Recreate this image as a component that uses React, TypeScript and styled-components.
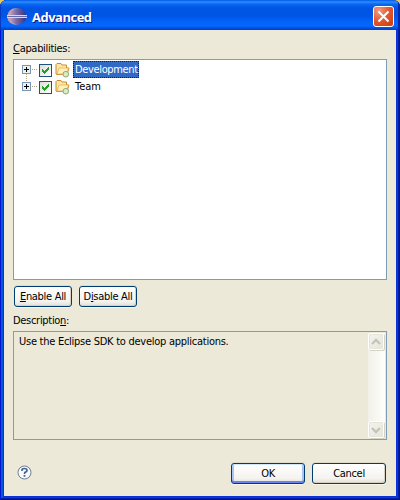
import React from 'react';
import styled, { createGlobalStyle, css } from 'styled-components';

const Global = createGlobalStyle`
  * { box-sizing: border-box; }
  html, body { margin: 0; padding: 0; width: 400px; height: 500px; overflow: hidden; background: #e8c860; }
  body { font: 11px/14px "DejaVu Sans Condensed", "DejaVu Sans", sans-serif; font-stretch: condensed; color: #000; }
  svg { display: block; flex: none; }
`;

const Frame = styled.div`
  width: 400px;
  height: 500px;
  display: flex;
  flex-direction: column;
  border-radius: 7px 7px 0 0;
  overflow: hidden;
  padding: 0 4px 4px;
  background: #0831d9;
  box-shadow: inset 1px 0 #0019cf, inset -1px -1px #00138c, inset -2px -2px #001ea0, inset 3px 0 #0855dd, inset -3px -3px #0441d8;
`;

const TitleBar = styled.header`
  height: 30px;
  flex: none;
  margin: 0 -4px;
  padding: 3px 6px 0 7px;
  display: flex;
  align-items: center;
  background: linear-gradient(#0058e6 0, #2b8fff 2px, #0c68f4 4px, #0054e3 8px, #0055e5 16px, #0264fb 22px, #0368ff 26px, #0050d8 28px, #003dd7 30px);
  box-shadow: inset 1px 0 #0838c0, inset -2px 0 #0028a8;
`;

const Title = styled.h1`
  margin: 1px auto 0 5px;
  font: bold 13px/16px "Open Sans", "DejaVu Sans", sans-serif;
  letter-spacing: -0.5px;
  color: #fff;
  text-shadow: 1px 1px #0a1883;
`;

const CloseButton = styled.button`
  width: 21px;
  height: 21px;
  padding: 0;
  display: grid;
  place-items: center;
  border: 1px solid #fff;
  border-radius: 3px;
  background: radial-gradient(circle at 25% 20%, #f09a80 0, #e2572f 50%, #c83b0c 100%);
`;

const Client = styled.main`
  flex: 1;
  padding: 12px 9px 0;
  background: #ece9d8;
  display: flex;
  flex-direction: column;
`;

const Text = styled.span<{ $spacing?: number }>`
  white-space: nowrap;
  letter-spacing: ${p => p.$spacing ?? -0.3}px;
`;

const Key = styled.span`
  text-decoration: underline;
  text-decoration-thickness: 1px;
  text-underline-offset: 1px;
  text-decoration-skip-ink: none;
`;

const Caption = styled.div`
  height: 14px;
  margin-bottom: 3px;
`;

const Tree = styled.div`
  height: 221px;
  flex: none;
  border: 1px solid #7f9db9;
  background: #fff;
  padding: 1px 0 0 8px;
`;

const TreeRow = styled.div`
  height: 17px;
  display: flex;
  align-items: center;
`;

const Checkbox = styled.span`
  width: 13px;
  height: 13px;
  display: grid;
  place-items: center;
  border: 1px solid #1c5180;
  background: linear-gradient(135deg, #dcdcd7, #fff);
  margin: 2px 3px 0 0;
`;

const RowLabel = styled.span<{ $selected?: boolean }>`
  height: 17px;
  margin-left: 3px;
  padding: 0 1px;
  line-height: 17px;
  border: solid transparent;
  border-width: 0 1px;
  ${p => p.$selected && css`
    width: 66px;
    color: #fff;
    background: #316ac5;
    outline: 1px dotted #102040;
    outline-offset: -1px;
  `}
`;

const Buttons = styled.div`
  display: flex;
  gap: 7px;
  height: 21px;
  margin: 6px 0 7px;
  padding-left: 1px;
`;

const PushButton = styled.button<{ $width: number; $primary?: boolean }>`
  width: ${p => p.$width}px;
  height: 21px;
  padding: 1px 0 0;
  font: inherit;
  color: #000;
  border: 1px solid #003c74;
  border-radius: 3px;
  background: linear-gradient(#fff, #f4f3ee 75%, #e2dfd5);
  box-shadow: ${p => p.$primary
    ? 'inset 0 1px #cee7ff, inset 0 -2px #6982ee, inset 2px 0 #a9c5f4, inset -2px 0 #a9c5f4'
    : 'inset -1px -1px #d6d0c5'}, 0 1px #f7f5ec, 0 -1px #dedbc9;
`;

const Description = styled.div`
  height: 109px;
  flex: none;
  border: 1px solid #7f9db9;
  display: flex;
  justify-content: space-between;
  padding: 1px 1px 1px 5px;
`;

const DescriptionText = styled.p`
  margin: 2px 0 0;
`;

const ScrollTrack = styled.div`
  width: 17px;
  display: flex;
  flex-direction: column;
  justify-content: space-between;
  background: linear-gradient(90deg, #f1f0e8, #fefefb);
`;

const ScrollButton = styled.span`
  width: 16px;
  height: 17px;
  display: grid;
  place-items: center;
  background: linear-gradient(135deg, #f4f3ed, #e7e6dc);
  border: 1px solid #fff;
  border-radius: 2px;
  box-shadow: inset 0 0 0 1px #e6e5db, 1px 1px #d4d2c4;
`;

const Footer = styled.footer`
  display: flex;
  justify-content: space-between;
  align-items: center;
  margin-top: 17px;
  padding: 0 1px 0 4px;

  > svg { margin-bottom: 3px; }
`;

const EclipseIcon = () => (
  <svg width="20" height="18" viewBox="0 0 20 18">
    <defs>
      <linearGradient id="globe"><stop stopColor="#c8a3b5" /><stop offset=".4" stopColor="#776ba8" /><stop offset="1" stopColor="#34317f" /></linearGradient>
    </defs>
    <circle cx="8.5" cy="8.5" r="8.3" fill="#bba1b7" />
    <circle cx="11" cy="8.5" r="8.3" fill="url(#globe)" />
    <path d="M0 7.5h20M0 9.5h20" stroke="#d6d5f2" />
    <path d="M1 8.5h19" stroke="#656aae" />
  </svg>
);

const Expander = ({ first }: { first?: boolean }) => (
  <svg width="17" height="17" viewBox="0 0 17 17" shapeRendering="crispEdges">
    <path d={first ? 'M4.5 13v4' : 'M4.5 0v4'} stroke="#aaa58f" strokeDasharray="1 1" />
    <path d="M10 8.5h6" stroke="#aaa58f" strokeDasharray="1 1" />
    <rect x=".5" y="4.5" width="8" height="8" fill="#f2f0eb" stroke="#7898b5" />
    <path d="M2 8.5h5M4.5 6v5" stroke="#000" />
  </svg>
);

const Check = () => (
  <svg width="7" height="7" viewBox="0 0 7 7" shapeRendering="crispEdges">
    <path d="M0 2h1v1h1v1h1V3h1V2h1V1h1V0h1v3H6v1H5v1H4v1H3v1H2V6H1V5H0z" fill="#21a121" />
  </svg>
);

const FolderIcon = () => (
  <svg width="15" height="16" viewBox="0 0 15 16">
    <path d="M1 12V2.5L2 1.5h4l1 1.5h4.5v3H14l-2 6.5H2z" fill="#ffe7a0" stroke="#c98c32" />
    <path d="M2 12l2-6h9.5l-2 6z" fill="#fff0ba" stroke="#dcae58" strokeWidth=".7" />
    <circle cx="10.8" cy="12.2" r="2.8" fill="#d9edc4" stroke="#8aa873" />
  </svg>
);

const Chevron = ({ down }: { down?: boolean }) => (
  <svg width="10" height="8" viewBox="0 0 10 8">
    <path d={down ? 'M1 2l4 4 4-4' : 'M1 6l4-4 4 4'} fill="none" stroke="#c5c4b9" strokeWidth="2.3" />
  </svg>
);

const HelpIcon = () => (
  <svg width="15" height="15" viewBox="0 0 15 15">
    <circle cx="7.5" cy="7.5" r="6.5" fill="#f7f9fc" stroke="#6c7d98" />
    <path d="M5 6V5q0-1.5 2.5-1.5T10 5.4Q10 6.5 8.4 7.1 7.5 7.5 7.5 9" fill="none" stroke="#48638b" strokeWidth="1.7" />
    <path d="M6.6 10h1.8v1.7H6.6z" fill="#48638b" />
  </svg>
);

const capabilities = [
  { name: 'Development', selected: true, spacing: -0.35 },
  { name: 'Team', selected: false, spacing: 0 },
];

export default function App() {
  return (
    <>
      <Global />
      <Frame>
        <TitleBar>
          <EclipseIcon />
          <Title>Advanced</Title>
          <CloseButton aria-label="Close">
            <svg width="13" height="13" viewBox="0 0 13 13"><path d="M1.5 1.5l10 10M11.5 1.5l-10 10" stroke="#fff" strokeWidth="2" /></svg>
          </CloseButton>
        </TitleBar>
        <Client>
          <Caption><Text><Key>C</Key>apabilities:</Text></Caption>
          <Tree>
            {capabilities.map((item, i) => (
              <TreeRow key={item.name}>
                <Expander first={i === 0} />
                <Checkbox><Check /></Checkbox>
                <FolderIcon />
                <RowLabel $selected={item.selected}><Text $spacing={item.spacing}>{item.name}</Text></RowLabel>
              </TreeRow>
            ))}
          </Tree>
          <Buttons>
            <PushButton $width={58}><Text><Key>E</Key>nable All</Text></PushButton>
            <PushButton $width={58}><Text>D<Key>i</Key>sable All</Text></PushButton>
          </Buttons>
          <Caption><Text>Descriptio<Key>n</Key>:</Text></Caption>
          <Description>
            <DescriptionText><Text $spacing={-0.26}>Use the Eclipse SDK to develop applications.</Text></DescriptionText>
            <ScrollTrack>
              <ScrollButton><Chevron /></ScrollButton>
              <ScrollButton><Chevron down /></ScrollButton>
            </ScrollTrack>
          </Description>
          <Footer>
            <HelpIcon />
            <Buttons>
              <PushButton $width={74} $primary><Text>OK</Text></PushButton>
              <PushButton $width={74}><Text>Cancel</Text></PushButton>
            </Buttons>
          </Footer>
        </Client>
      </Frame>
    </>
  );
}
